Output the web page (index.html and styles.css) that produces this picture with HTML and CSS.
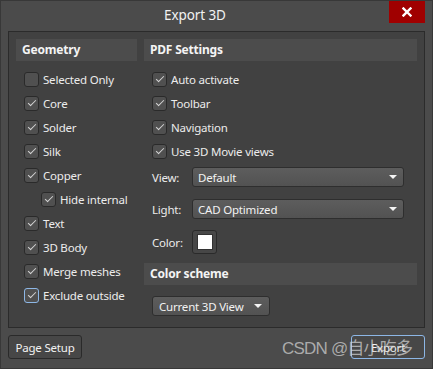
FILE: index.html
```html
<!DOCTYPE html>
<html>
<head>
<meta charset="utf-8">
<link rel="stylesheet" href="styles.css">
</head>
<body>
<div class="window">
  <div class="titlebar">
    <div class="title">Export 3D</div>
    <button class="close" aria-label="Close">
      <svg width="10" height="10" viewBox="0 0 10 10"><path d="M1.5 1.5 L8.5 8.5 M8.5 1.5 L1.5 8.5" stroke="#fff" stroke-width="2.4" stroke-linecap="square"/></svg>
    </button>
  </div>

  <div class="panel">
    <div class="col col-left">
      <div class="section-head">Geometry</div>
      <div class="rows">
        <label class="check"><span class="box"></span>Selected Only</label>
        <label class="check"><span class="box on"></span>Core</label>
        <label class="check"><span class="box on"></span>Solder</label>
        <label class="check"><span class="box on"></span>Silk</label>
        <label class="check"><span class="box on"></span>Copper</label>
        <label class="check indent"><span class="box on"></span>Hide internal</label>
        <label class="check"><span class="box on"></span>Text</label>
        <label class="check"><span class="box on"></span>3D Body</label>
        <label class="check"><span class="box on"></span>Merge meshes</label>
        <label class="check"><span class="box on focus"></span>Exclude outside</label>
      </div>
    </div>

    <div class="col col-right">
      <div class="section-head">PDF Settings</div>
      <div class="rows">
        <label class="check"><span class="box on"></span>Auto activate</label>
        <label class="check"><span class="box on"></span>Toolbar</label>
        <label class="check"><span class="box on"></span>Navigation</label>
        <label class="check"><span class="box on"></span>Use 3D Movie views</label>
      </div>
      <div class="field field-view">
        <span class="lbl">View:</span>
        <div class="select"><span>Default</span><span class="arrow"></span></div>
      </div>
      <div class="field field-light">
        <span class="lbl">Light:</span>
        <div class="select"><span>CAD Optimized</span><span class="arrow"></span></div>
      </div>
      <div class="field field-color">
        <span class="lbl">Color:</span>
        <div class="swatch"><span class="swatch-fill"></span></div>
      </div>
      <div class="section-head scheme-head">Color scheme</div>
      <div class="scheme-row">
        <div class="select select-scheme"><span>Current 3D View</span><span class="arrow"></span></div>
      </div>
    </div>
  </div>

  <div class="footer">
    <button class="btn">Page Setup</button>
    <button class="btn btn-primary">Export</button>
  </div>

  <div class="watermark">CSDN @自小吃多</div>
</div>
</body>
</html>
```

FILE: styles.css
```css
* { box-sizing: border-box; }

html, body {
  margin: 0;
  padding: 0;
  background: #4a4a4a;
}

body {
  font-family: "Segoe UI", "Noto Sans", "Open Sans", sans-serif;
  font-size: 11.5px;
  letter-spacing: -0.2px;
  color: #ececec;
}

.window {
  position: relative;
  width: 433px;
  height: 369px;
  background: #4b4b4b;
  border: 1px solid #383838;
  display: flex;
  flex-direction: column;
}

.titlebar {
  height: 30px;
  display: flex;
  align-items: flex-start;
  padding-right: 7px;
}

.title {
  flex: 1;
  text-align: center;
  font-size: 13.5px;
  letter-spacing: -0.1px;
  line-height: 28px;
  color: #f2f2f2;
}

.close {
  width: 36px;
  height: 22px;
  border: 0;
  padding: 0;
  background: #a00000;
  display: flex;
  align-items: center;
  justify-content: center;
  flex: none;
}

.panel {
  margin: 0 7px;
  height: 297px;
  border: 1px solid #2b2b2b;
  background: #414141;
  padding: 7px;
  display: grid;
  grid-template-columns: 121px 273px;
  column-gap: 7px;
  align-items: start;
}

.section-head {
  height: 22px;
  background: #4c4c4c;
  font-weight: bold;
  font-size: 12px;
  color: #f4f4f4;
  padding-left: 6px;
  line-height: 22px;
}

.rows {
  margin-top: 6px;
  padding-left: 8px;
  display: flex;
  flex-direction: column;
}

.check {
  height: 24px;
  display: flex;
  align-items: center;
  gap: 4px;
  white-space: nowrap;
}

.check.indent { padding-left: 17px; }

.box {
  width: 15px;
  height: 15px;
  border: 1px solid #2a2a2a;
  border-radius: 3px;
  background: #505050;
  flex: none;
  display: flex;
  align-items: center;
  justify-content: center;
}

.box.on::after {
  content: "";
  width: 7px;
  height: 3px;
  border-left: 1.2px solid #d6d6d6;
  border-bottom: 1.2px solid #d6d6d6;
  transform: translate(0, -1px) rotate(-45deg);
}

.box.focus {
  border-color: #8db7e6;
}

.field {
  display: flex;
  align-items: center;
  padding-left: 8px;
}

.lbl {
  width: 40px;
  flex: none;
}

.field-view { margin-top: 4px; }
.field-light { margin-top: 12px; }
.field-color { margin-top: 11px; }

.select {
  height: 20px;
  width: 212px;
  border: 1px solid #2e2e2e;
  border-radius: 3px;
  background: linear-gradient(#5d5d5d, #525252);
  display: flex;
  align-items: center;
  justify-content: space-between;
  padding: 0 4px 0 5px;
  color: #f2f2f2;
}

.arrow {
  width: 0;
  height: 0;
  border-left: 4px solid transparent;
  border-right: 4px solid transparent;
  border-top: 4px solid #f4f4f4;
  margin-right: 2px;
}

.swatch {
  width: 25px;
  height: 24px;
  border: 1px solid #2a2a2a;
  border-radius: 3px;
  background: #474747;
  display: flex;
  align-items: center;
  justify-content: center;
}

.swatch-fill {
  width: 16px;
  height: 16px;
  background: #ffffff;
  border: 1px solid #333;
}

.scheme-head {
  margin-top: 9px;
}

.scheme-row {
  margin-top: 11px;
  padding-left: 8px;
}

.select-scheme {
  width: 118px;
  padding-left: 6px;
  padding-right: 5px;
}

.footer {
  margin: 7px 7px 0;
  display: flex;
  justify-content: space-between;
}

.btn {
  width: 74px;
  height: 24px;
  border: 1px solid #2a2a2a;
  border-radius: 3px;
  background: #474747;
  color: #f2f2f2;
  font-family: inherit;
  font-size: 11.5px;
  letter-spacing: -0.2px;
  padding: 0;
}

.btn-primary {
  border-color: #8db7e6;
}

.watermark {
  position: absolute;
  left: 281px;
  top: 337px;
  font-family: "Liberation Sans", "Noto Sans CJK SC", sans-serif;
  font-size: 17px;
  letter-spacing: -0.8px;
  line-height: 22px;
  color: rgba(215, 215, 215, 0.7);
  white-space: nowrap;
  pointer-events: none;
}
```
